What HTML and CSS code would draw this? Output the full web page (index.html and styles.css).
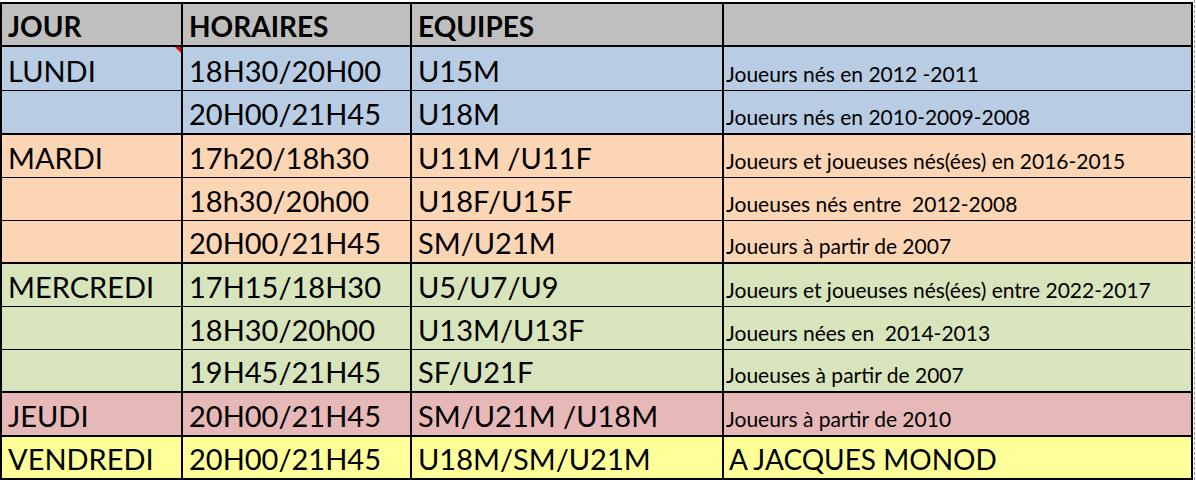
FILE: index.html
```html
<!DOCTYPE html>
<html lang="fr">
<head>
<meta charset="utf-8">
<title>Horaires</title>
<link rel="stylesheet" href="styles.css">
</head>
<body>
<div class="sheet">
<table class="planning">
  <colgroup>
    <col class="c-jour">
    <col class="c-horaire">
    <col class="c-equipe">
    <col class="c-info">
  </colgroup>
  <thead>
    <tr class="head">
      <th>JOUR</th><th>HORAIRES</th><th>EQUIPES</th><th></th>
    </tr>
  </thead>
  <tbody>
    <tr class="blue grp tall">
      <td class="day has-note">LUNDI<span class="note"></span></td><td>18H30/20H00</td><td>U15M</td><td class="info">Joueurs nés en 2012 -2011</td>
    </tr>
    <tr class="blue tall">
      <td class="day"></td><td>20H00/21H45</td><td>U18M</td><td class="info">Joueurs nés en 2010-2009-2008</td>
    </tr>
    <tr class="orange grp">
      <td class="day">MARDI</td><td>17h20/18h30</td><td>U11M /U11F</td><td class="info">Joueurs et joueuses nés(ées) en 2016-2015</td>
    </tr>
    <tr class="orange">
      <td class="day"></td><td>18h30/20h00</td><td>U18F/U15F</td><td class="info">Joueuses nés entre&nbsp; 2012-2008</td>
    </tr>
    <tr class="orange">
      <td class="day"></td><td>20H00/21H45</td><td>SM/U21M</td><td class="info">Joueurs à partir de 2007</td>
    </tr>
    <tr class="green grp">
      <td class="day">MERCREDI</td><td>17H15/18H30</td><td>U5/U7/U9</td><td class="info">Joueurs et joueuses nés(ées) entre 2022-2017</td>
    </tr>
    <tr class="green">
      <td class="day"></td><td>18H30/20h00</td><td>U13M/U13F</td><td class="info">Joueurs nées en&nbsp; 2014-2013</td>
    </tr>
    <tr class="green">
      <td class="day"></td><td>19H45/21H45</td><td>SF/U21F</td><td class="info">Joueuses à partir de 2007</td>
    </tr>
    <tr class="pink grp tall">
      <td class="day">JEUDI</td><td>20H00/21H45</td><td>SM/U21M /U18M</td><td class="info">Joueurs à partir de 2010</td>
    </tr>
    <tr class="yellow grp">
      <td class="day">VENDREDI</td><td>20H00/21H45</td><td>U18M/SM/U21M</td><td class="big">A JACQUES MONOD</td>
    </tr>
  </tbody>
</table>
</div>
</body>
</html>
```

FILE: styles.css
```css
html, body {
  margin: 0;
  padding: 0;
  background: #ffffff;
}

.sheet {
  display: inline-block;
  padding-top: 2px;
  padding-right: 1px;
  border-right: 1px dashed #9a9a9a;
}

.planning {
  border-collapse: collapse;
  table-layout: fixed;
  width: 1193px;
  border: 2px solid #000;
  font-family: Lato, "Open Sans", sans-serif;
  color: #000;
}

.c-jour { width: 181px; }
.c-horaire { width: 229px; }
.c-equipe { width: 312px; }
.c-info { width: 469px; }

.planning th,
.planning td {
  border-left: 2px solid #000;
  border-right: 2px solid #000;
  border-top: 1px solid #000;
  border-bottom: 1px solid #000;
  vertical-align: bottom;
  text-align: left;
  white-space: nowrap;
  overflow: hidden;
  padding: 0 0 5px 6px;
  line-height: 1;
}

.planning tr { height: 43px; }
.planning tr.head { height: 43px; }
.planning tr.tall { height: 44px; }

.head th {
  background: #bfbfbf;
  font-weight: 700;
  font-size: 28px;
  padding-left: 6px;
  padding-bottom: 5px;
  border-bottom: 2px solid #000;
}

.planning td {
  font-size: 29px;
}

.planning tr.grp td { border-top: 2px solid #000; }

.planning td.day { padding-left: 6px; }

.planning td.info {
  font-size: 21px;
  padding-left: 2px;
  padding-bottom: 6px;
}

.planning td.big {
  font-size: 28px;
  padding-left: 5px;
}

.blue td { background: #b8cce4; }
.orange td { background: #fcd5b4; }
.green td { background: #d8e4bc; }
.pink td { background: #e6b8b7; }
.yellow td { background: #ffff99; }

.has-note { position: relative; }

.note {
  position: absolute;
  top: 0;
  right: 0;
  width: 0;
  height: 0;
  border-top: 6px solid #ff0000;
  border-left: 6px solid transparent;
}
```
